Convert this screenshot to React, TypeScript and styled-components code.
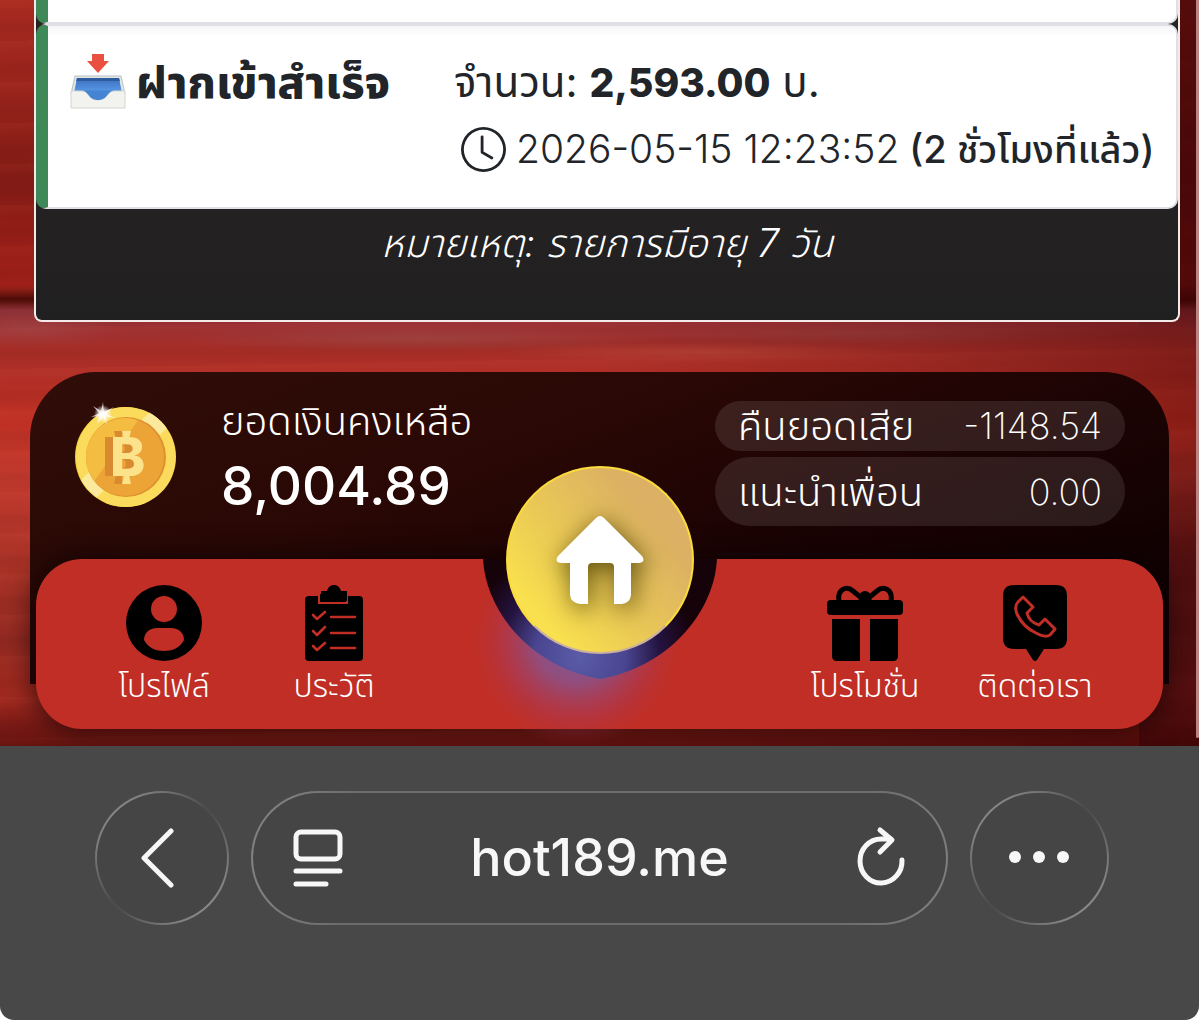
import React from "react";
import styled, { createGlobalStyle, css } from "styled-components";
import { BsClock } from "react-icons/bs";

const font = `Inter, "Noto Sans Thai", "Noto Sans", sans-serif`;

const GlobalStyle = createGlobalStyle`
  *, *::before, *::after { box-sizing: border-box; }
  body { margin: 0; background: #fff; font-family: ${font}; }
  button, input { font: inherit; color: inherit; }
`;

const Phone = styled.main`
  min-height: 100vh;
  display: flex;
  flex-direction: column;
  overflow: hidden;
  border-radius: 0 0 14px 14px;
  background: #484848;
`;

const Site = styled.div`
  position: relative;
  overflow: hidden;
  padding: 0 30px 17px;
  background:
    linear-gradient(180deg, rgba(50, 0, 4, 0.55) 290px, transparent 330px 440px, rgba(40, 0, 8, 0.55) 560px, rgba(40, 0, 8, 0.4)) right / 60px 100% no-repeat,
    linear-gradient(90deg, transparent 50%, rgba(50, 0, 4, 0.15) 75%, rgba(60, 0, 0, 0.4)),
    linear-gradient(180deg, transparent 690px, rgba(40, 0, 4, 0.35) 746px),
    radial-gradient(240px 14px at 420px 338px, rgba(150, 90, 85, 0.4), transparent),
    radial-gradient(260px 12px at 860px 334px, rgba(150, 75, 70, 0.4), transparent),
    radial-gradient(200px 10px at 700px 352px, rgba(200, 90, 70, 0.4), transparent),
    radial-gradient(90px 20px at 30px 328px, rgba(165, 80, 80, 0.45), transparent),
    repeating-linear-gradient(179deg, rgba(255, 120, 90, 0.05) 0 3px, transparent 12px 19px, rgba(60, 0, 0, 0.05) 25px 29px, transparent 41px),
    linear-gradient(180deg, #a82a20 0, #98241c 90px, #821b15 180px, #931e17 230px, #a02018 285px,
      #4c0c08 299px, #5b130e 302px, #903038 310px, #a82e28 350px, #bf3024 420px, #c0392d 480px,
      #a83226 570px, #932a22 640px, #a52a20 700px, #851c16 746px);
`;

const ScrollThumb = styled.div`
  position: absolute;
  top: 0;
  right: 0;
  bottom: 8px;
  width: 3px;
  border-radius: 0 0 3px 3px;
  background: #bb8583;
`;

const History = styled.section`
  margin: 0 -11px 0 4px;
  border: 2px solid #f5eaea;
  border-top: 0;
  border-radius: 0 0 8px 8px;
  background: linear-gradient(#282322, #212021);
  color: #fff;
`;

const Records = styled.ul`
  list-style: none;
  margin: 0;
  padding: 0;
`;

const Record = styled.li<{ $first?: boolean }>`
  display: grid;
  grid-template-columns: 384px 1fr;
  min-height: ${(p) => (p.$first ? 24 : 184)}px;
  padding: ${(p) => (p.$first ? "0" : "24px 0 24px 22px")};
  border: 2px solid #dfdfe5;
  border-left: 12px solid #3f8857;
  border-top-width: ${(p) => (p.$first ? 0 : 2)}px;
  border-radius: ${(p) => (p.$first ? "0 0 10px 10px" : "10px")};
  background: ${(p) => (p.$first ? "#fff" : "linear-gradient(#f6f6f8, #fff 10px)")};
  color: #212529;
`;

const Status = styled.strong`
  display: flex;
  align-items: center;
  gap: 10px;
  height: 64px;
  font-size: 45px;
  font-weight: 800;
  line-height: 64px;
  white-space: nowrap;
`;

const Details = styled.div`
  white-space: nowrap;
`;

const Amount = styled.p`
  margin: 0;
  font-size: 42px;
  line-height: 64px;
  b { font-size: 39px; font-weight: 800; }
`;

const When = styled.p`
  display: flex;
  align-items: center;
  gap: 10px;
  margin: 0;
  padding-left: 7px;
  font-size: 39px;
  font-weight: 300;
  line-height: 68px;
  small { font-size: 38px; font-weight: 500; }
`;

const Note = styled.p`
  margin: 0;
  padding-bottom: 43px;
  font-size: 39px;
  font-style: italic;
  font-weight: 300;
  line-height: 68px;
  text-align: center;
`;

const Dock = styled.footer`
  margin-top: 50px;
`;

const Wallet = styled.section`
  display: flex;
  align-items: flex-start;
  justify-content: space-between;
  min-height: 312px;
  padding: 29px 44px 0;
  border-radius: 66px 66px 0 0;
  background: linear-gradient(160deg, #300d08 0, #290805 35%, #1b0303 60%, #100102 85%);
  color: #fff;
`;

const Balance = styled.div`
  display: flex;
  gap: 44px;
`;

const BalanceText = styled.dl`
  margin: 0;
  font-weight: 300;
  dt { font-size: 40px; line-height: 40px; white-space: nowrap; }
  dd { margin: 12px 0 0; font-size: 53px; font-weight: 500; line-height: 66px; }
`;

const Bonuses = styled.dl`
  display: grid;
  gap: 6px;
  width: 410px;
  margin: 0;
`;

const Bonus = styled.div<{ $tall?: boolean }>`
  display: flex;
  align-items: center;
  justify-content: space-between;
  height: ${(p) => (p.$tall ? 69 : 50)}px;
  padding: 0 23px;
  border-radius: 35px;
  background: rgba(255, 255, 255, 0.1);
  font-size: 40px;
  font-weight: 300;
  line-height: 50px;
  white-space: nowrap;
  dd { margin: 0; font-size: 36px; font-weight: 200; }
`;

const TabBar = styled.nav`
  position: relative;
  display: flex;
  justify-content: space-between;
  margin: -125px 6px 0;
  padding: 26px 43px 18px;
  border-radius: 46px;
  background: #c02e25;
  box-shadow: 0 0 30px rgba(10, 0, 0, 0.8);
`;

const TabGroup = styled.div`
  display: flex;
`;

const Tab = styled.a`
  display: flex;
  flex-direction: column;
  align-items: center;
  width: 170px;
  color: #fff;
  font-size: 32px;
  font-weight: 300;
  line-height: 50px;
  text-decoration: none;
  white-space: nowrap;
  svg { color: #000; }
`;

const Notch = styled.svg`
  position: absolute;
  top: 0;
  left: 50%;
  transform: translateX(-50%);
`;

const HomeButton = styled.button`
  position: absolute;
  top: -93px;
  left: 50%;
  transform: translateX(-50%);
  display: grid;
  place-items: center;
  width: 188px;
  height: 188px;
  padding: 0;
  border: 2px solid #fbdc3c;
  border-bottom-color: #c9b0a0;
  border-radius: 50%;
  background: linear-gradient(50deg, #f8e04e 18%, #ebca55 42%, #dcb163 75%, #dab068);
  svg { filter: drop-shadow(3px 5px 12px rgba(70, 60, 0, 0.85)); }
`;

const Toolbar = styled.div`
  flex: 1;
  display: flex;
  align-items: flex-start;
  gap: 22px;
  padding: 45px 90px 95px 95px;
  color: #f7f7f7;
`;

const glass = css`
  border: 2px solid transparent;
  border-radius: 67px;
  background:
    linear-gradient(#454545, #454545) padding-box,
    linear-gradient(135deg, #858585 15%, #4c4c4c 48%, #505050 55%, #888 85%) border-box;
`;

const RoundButton = styled.button<{ $wide?: boolean }>`
  ${glass}
  flex: none;
  display: grid;
  place-items: center;
  width: ${(p) => (p.$wide ? 139 : 134)}px;
  height: 134px;
  padding: 0;
`;

const AddressBar = styled.div`
  ${glass}
  background:
    linear-gradient(#454545, #454545) padding-box,
    linear-gradient(100deg, #808080 4%, #6c6c6c 15%, #6c6c6c 85%, #808080) border-box;
  flex: 1;
  min-width: 0;
  display: flex;
  align-items: center;
  height: 134px;
  padding: 0 40px;
`;

const Address = styled.input`
  flex: 1;
  min-width: 0;
  border: 0;
  padding: 0;
  background: none;
  font-size: 52px;
  font-weight: 500;
  line-height: 66px;
  text-align: center;
`;

const PlainButton = styled.button`
  display: flex;
  padding: 0;
  border: 0;
  background: none;
`;

const Embossed = styled.g`
  fill: #fce38b;
  filter: drop-shadow(-8px 0 0 #d98930);
`;

const InboxIcon = () => (
  <svg width="56" height="56" viewBox="0 0 56 56" aria-hidden="true">
    <defs>
      <linearGradient id="tray" x1="0" y1="0" x2="0" y2="1">
        <stop offset="0" stopColor="#3a6fbd" />
        <stop offset="1" stopColor="#5c9cea" />
      </linearGradient>
    </defs>
    <path d="M5 22H51L55 40H1Z" fill="#e4e6e4" stroke="#b9c0c4" />
    <path d="M7 24H49L52 39H4Z" fill="url(#tray)" />
    <path d="M7 24H49L50 27H6Z" fill="#2f5b9f" />
    <path d="M1 37H12C19 37 18 46 28 46S37 37 44 37H55V54H1Z" fill="#f2f2ef" stroke="#d5d5d0" />
    <path d="M12 36.5C19 37 18 46 28 46S37 37 44 36.5Z" fill="#4584d2" />
    <path d="M22 0H34V7H39L28 19L17 7H22Z" fill="#e9503f" />
  </svg>
);

const CoinIcon = () => (
  <svg width="103" height="106" viewBox="0 0 103 106" aria-hidden="true">
    <defs>
      <clipPath id="coin"><circle cx="52" cy="56" r="50" /></clipPath>
      <clipPath id="face"><circle cx="51" cy="56" r="39" /></clipPath>
      <radialGradient id="spark">
        <stop offset="0" stopColor="#fff" />
        <stop offset="0.4" stopColor="#fff" stopOpacity="0.8" />
        <stop offset="1" stopColor="#fff" stopOpacity="0" />
      </radialGradient>
    </defs>
    <circle cx="51" cy="56" r="50" fill="#efcf35" />
    <circle cx="52" cy="56" r="50" fill="#fadb5c" />
    <path clipPath="url(#coin)" d="M0 86L82 5L100 20L15 104Z" fill="#fcea9c" />
    <circle cx="52" cy="56" r="40" fill="#dd9130" />
    <circle cx="51" cy="56" r="39" fill="#eda437" />
    <path clipPath="url(#face)" d="M0 0H78L10 94H0Z" fill="#f5bc42" />
    <Embossed>
      <text x="36" y="75" fontFamily="Inter, sans-serif" fontSize="53" fontWeight="800">B</text>
      <path d="M48 30H57L55 38H50ZM50 74H55L57 83H48Z" />
    </Embossed>
    <circle cx="29" cy="13" r="9" fill="url(#spark)" />
    <path d="M29 1L30 11L40 6L32 13L42 17L31 15L33 24L29 16L23 23L26 15L17 16L25 12L19 5L27 10Z" fill="#fff" opacity="0.7" />
  </svg>
);

const ProfileIcon = () => (
  <svg width="76" height="76" viewBox="0 0 76 76" aria-hidden="true">
    <circle cx="38" cy="38" r="38" fill="currentColor" />
    <circle cx="38" cy="24" r="13" fill="#c02e25" />
    <path d="M31 43H45C53 43 58 48 58 55C54 63 46 66 38 66S22 63 18 55C18 48 23 43 31 43Z" fill="#c02e25" />
  </svg>
);

const ClipboardIcon = () => (
  <svg width="76" height="76" viewBox="0 0 76 76" aria-hidden="true">
    <rect x="9" y="11" width="58" height="65" rx="4" fill="currentColor" />
    <path d="M23 9V18H51V9" fill="currentColor" stroke="#c02e25" strokeWidth="2" />
    <path d="M25 6H31C33 -2 43 -2 45 6H51V16H25Z" fill="currentColor" />
    <g fill="none" stroke="#c02e25" strokeWidth="2.6" strokeLinecap="round" strokeLinejoin="round">
      <path d="M17 30L21 34L29 27M17 46L21 50L29 42M17 61L21 65L29 58" />
      <path d="M35 32H59M35 48H59M35 63H59" />
    </g>
  </svg>
);

const GiftIcon = () => (
  <svg width="76" height="76" viewBox="0 0 76 76" aria-hidden="true">
    <g fill="currentColor">
      <rect x="0" y="15" width="76" height="15" rx="4" />
      <path d="M5 34H33V76H10Q5 76 5 71ZM43 34H71V71Q71 76 66 76H43Z" />
      <circle cx="38" cy="12" r="6" />
    </g>
    <path d="M37 15L26 6C19 0 10 5 12 16M39 15L50 6C57 0 66 5 64 16" fill="none" stroke="currentColor" strokeWidth="5" />
    <path d="M31 15L39 9L45 15Z" fill="currentColor" />
  </svg>
);

const ContactIcon = () => (
  <svg width="76" height="76" viewBox="0 0 76 76" aria-hidden="true">
    <path d="M17 0H59Q70 0 70 11V53Q70 64 59 64H47L40 75Q38 77 36 75L29 64H17Q6 64 6 53V11Q6 0 17 0Z" fill="currentColor" />
    <path d="M26 12L36 22L30 28Q32 37 42 40L48 34L58 44L53 50Q48 53 39 48Q26 42 20 29Q17 21 21 17Z" fill="none" stroke="#c02e25" strokeWidth="3" strokeLinejoin="round" />
  </svg>
);

const HouseIcon = () => (
  <svg width="88" height="90" viewBox="0 0 88 90" aria-hidden="true">
    <path d="M40 3Q44 -1 48 3L86 41Q90 47 83 48H75V80Q74 88 66 89H58V52Q58 48 54 48H36Q32 48 32 52V89H24Q15 88 14 80V48H5Q-2 47 2 41Z" fill="#fff" />
  </svg>
);

const NotchShape = () => (
  <Notch width="360" height="187" viewBox="0 0 360 187" aria-hidden="true">
    <defs>
      <radialGradient id="halo" gradientUnits="userSpaceOnUse" cx="156" cy="82" r="105">
        <stop offset="0" stopColor="#6b62b4" stopOpacity="0.9" />
        <stop offset="0.4" stopColor="#7f5aa0" stopOpacity="0.7" />
        <stop offset="0.7" stopColor="#9a4478" stopOpacity="0.35" />
        <stop offset="1" stopColor="#b03848" stopOpacity="0" />
      </radialGradient>
      <radialGradient id="inner" gradientUnits="userSpaceOnUse" cx="160" cy="98" r="115">
        <stop offset="0" stopColor="#5a5ca8" />
        <stop offset="0.4" stopColor="#4a4590" />
        <stop offset="0.7" stopColor="#241340" />
        <stop offset="1" stopColor="#160209" />
      </radialGradient>
    </defs>
    <path d="M0 0H360V187H0Z" fill="url(#halo)" />
    <path d="M63 0C66 54 112 108 180 120C248 108 294 54 297 0Z" fill="url(#inner)" />
  </Notch>
);

const leftTabs = [
  { label: "โปรไฟล์", icon: <ProfileIcon /> },
  { label: "ประวัติ", icon: <ClipboardIcon /> },
];

const rightTabs = [
  { label: "โปรโมชั่น", icon: <GiftIcon /> },
  { label: "ติดต่อเรา", icon: <ContactIcon /> },
];

const Tabs = ({ items }: { items: { label: string; icon: React.ReactNode }[] }) => (
  <TabGroup>
    {items.map((item) => (
      <Tab key={item.label} href="#">
        {item.icon}
        {item.label}
      </Tab>
    ))}
  </TabGroup>
);

export default function App() {
  return (
    <>
      <GlobalStyle />
      <Phone>
        <Site>
          <History>
            <Records>
              <Record $first />
              <Record>
                <Status>
                  <InboxIcon />
                  ฝากเข้าสำเร็จ
                </Status>
                <Details>
                  <Amount>
                    จำนวน: <b>2,593.00</b> บ.
                  </Amount>
                  <When>
                    <BsClock size={45} aria-hidden="true" />
                    <time dateTime="2026-05-15T12:23:52">2026-05-15 12:23:52</time>
                    <small>(2 ชั่วโมงที่แล้ว)</small>
                  </When>
                </Details>
              </Record>
            </Records>
            <Note>หมายเหตุ: รายการมีอายุ 7 วัน</Note>
          </History>

          <Dock>
            <Wallet>
              <Balance>
                <CoinIcon />
                <BalanceText>
                  <dt>ยอดเงินคงเหลือ</dt>
                  <dd>8,004.89</dd>
                </BalanceText>
              </Balance>
              <Bonuses>
                <Bonus>
                  <dt>คืนยอดเสีย</dt>
                  <dd>-1148.54</dd>
                </Bonus>
                <Bonus $tall>
                  <dt>แนะนำเพื่อน</dt>
                  <dd>0.00</dd>
                </Bonus>
              </Bonuses>
            </Wallet>
            <TabBar>
              <NotchShape />
              <Tabs items={leftTabs} />
              <HomeButton aria-label="หน้าแรก">
                <HouseIcon />
              </HomeButton>
              <Tabs items={rightTabs} />
            </TabBar>
          </Dock>
          <ScrollThumb />
        </Site>

        <Toolbar>
          <RoundButton aria-label="Back">
            <svg width="44" height="60" viewBox="0 0 44 60" fill="none" stroke="currentColor" strokeWidth="5" strokeLinecap="round" strokeLinejoin="round">
              <path d="M31 3L4 30L31 57" />
            </svg>
          </RoundButton>
          <AddressBar>
            <PlainButton aria-label="Page menu">
              <svg width="50" height="58" viewBox="0 0 50 58" fill="none" stroke="currentColor" strokeWidth="5" strokeLinecap="round">
                <rect x="3" y="3" width="44" height="27" rx="5" />
                <path d="M3 42H47M3 55H33" />
              </svg>
            </PlainButton>
            <Address aria-label="Address" defaultValue="hot189.me" />
            <PlainButton aria-label="Reload">
              <svg width="50" height="64" viewBox="0 0 50 64" fill="none" stroke="currentColor" strokeWidth="5" strokeLinecap="round" strokeLinejoin="round">
                <path d="M46 34A21 22 0 1 1 25 13H35M24 4L36 14L24 26" />
              </svg>
            </PlainButton>
          </AddressBar>
          <RoundButton $wide aria-label="More">
            <svg width="64" height="16" viewBox="0 0 64 16" fill="currentColor">
              <circle cx="7" cy="7" r="6" />
              <circle cx="31" cy="7" r="6" />
              <circle cx="55" cy="7" r="6" />
            </svg>
          </RoundButton>
        </Toolbar>
      </Phone>
    </>
  );
}
